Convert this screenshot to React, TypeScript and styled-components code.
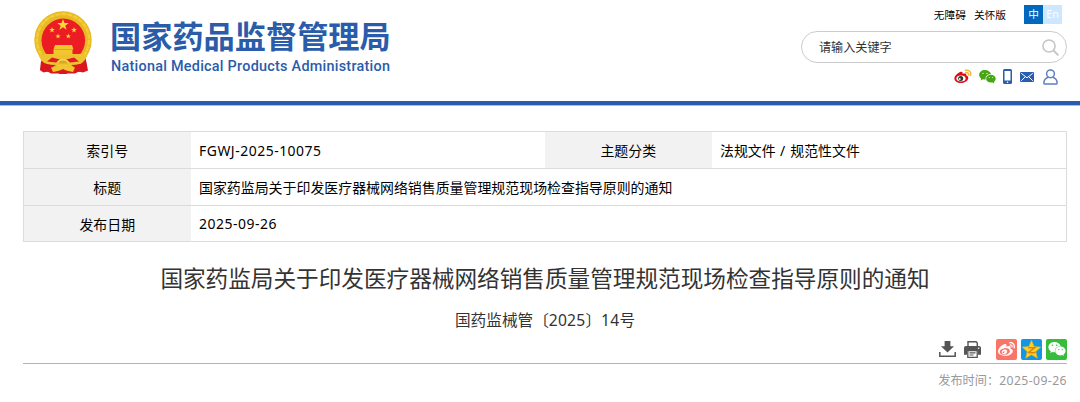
import styled, { createGlobalStyle } from 'styled-components';
import { FaWeibo, FaWeixin } from 'react-icons/fa';

const GlobalStyle = createGlobalStyle`
  * {
    box-sizing: border-box;
  }

  body {
    margin: 0;
    background: #fff;
    color: #000;
    font-family: 'Noto Sans', 'Noto Sans CJK SC', sans-serif;
    overflow: hidden;
  }
`;

const Page = styled.div`
  width: 1080px;
  height: 402px;
`;

const Header = styled.header`
  display: flex;
  justify-content: space-between;
  height: 105px;
  padding: 5px 13px 0 33px;
  border-bottom: 4px solid #2a5caf;
  box-shadow: 0 1px 0 #a9bfe0;
`;

const Brand = styled.div`
  display: flex;
  gap: 16px;
  padding-top: 5px;

  > svg {
    flex-shrink: 0;
  }
`;

const BrandText = styled.div`
  color: #2a5caa;
  white-space: nowrap;
`;

const BrandName = styled.h1`
  margin: 7px 0 0;
  font-family: 'Noto Sans CJK SC', sans-serif;
  font-size: 31.2px;
  font-weight: 700;
  line-height: 36px;
`;

const BrandSub = styled.p`
  margin: 4px 0 0 1px;
  font-family: Roboto, sans-serif;
  font-size: 14.4px;
  font-weight: 500;
  letter-spacing: 0.26px;
  line-height: 20px;
`;

const Tools = styled.div`
  display: flex;
  flex-direction: column;
  align-items: flex-end;
  width: 266px;
`;

const TopLinks = styled.div`
  display: flex;
  align-items: center;
  height: 19px;
  margin-right: 5px;
  font-size: 10.7px;
`;

const TopLink = styled.a`
  margin-right: 8px;
`;

const Lang = styled.span<{ $active?: boolean }>`
  width: 19px;
  height: 19px;
  margin-left: ${({ $active }) => ($active ? '10px' : '0')};
  background: ${({ $active }) => ($active ? '#0069bd' : '#cce7ff')};
  color: #fff;
  font-size: 10.7px;
  line-height: 19px;
  text-align: center;
`;

const SearchBox = styled.div`
  display: flex;
  align-items: center;
  justify-content: space-between;
  width: 266px;
  height: 32px;
  margin-top: 7px;
  padding: 0 7px 0 17px;
  border: 1.5px solid #ccc;
  border-radius: 16px;
  color: #333;
  font-size: 12.1px;
`;

const Social = styled.div`
  display: flex;
  align-items: center;
  height: 17px;
  margin: 5px 9px 0 0;
`;

const SocialItem = styled.span<{ $gap: number }>`
  display: flex;
  margin-left: ${({ $gap }) => $gap}px;
`;

const Main = styled.main`
  margin: 0 13px 0 23px;
  padding-top: 26px;
`;

const InfoTable = styled.div`
  border: 1px solid #dcdcdc;
  font-size: 13.93px;
`;

const InfoRow = styled.div`
  display: flex;
  height: 36px;

  & + & {
    height: 37px;
    border-top: 1px solid #dcdcdc;
  }

  & + & + & {
    height: 36px;
  }
`;

const Label = styled.div`
  display: flex;
  align-items: center;
  justify-content: center;
  width: 166.5px;
  background: #f2f2f2;
`;

const Value = styled.div<{ $width?: number }>`
  display: flex;
  align-items: center;
  width: ${({ $width }) => ($width ? `${$width}px` : 'auto')};
  padding-left: 8.5px;
  white-space: pre;
`;

const Latin = styled.span<{ $spacing?: number }>`
  letter-spacing: ${({ $spacing = 0.52 }) => $spacing}px;
`;

const Title = styled.h2`
  margin: 21px 0 0;
  color: #333;
  font-size: 22.63px;
  font-weight: 400;
  line-height: 32px;
  text-align: center;
  white-space: nowrap;
`;

const DocNumber = styled.p`
  margin: 13px 0 0;
  color: #333;
  font-size: 15.65px;
  line-height: 24px;
  text-align: center;
`;

const Actions = styled.div`
  display: flex;
  align-items: center;
  justify-content: flex-end;
  height: 32px;
  padding-top: 3px;
  border-bottom: 1.5px solid #b4b4b4;

  > svg + svg {
    margin-left: 8px;
  }
`;

const ShareList = styled.div`
  display: flex;
  gap: 4px;
  margin-left: 15px;
`;

const Share = styled.span<{ $color: string }>`
  display: flex;
  align-items: center;
  justify-content: center;
  width: 21px;
  height: 21px;
  border-radius: 2px;
  background: ${({ $color }) => $color};
  color: #fff;
`;

const PublishTime = styled.p`
  margin: 8px 0 0;
  color: #999;
  font-size: 12.2px;
  line-height: 18px;
  text-align: right;
`;

const STAR = 'M0-5 1.2-1.6 4.8-1.6 1.9.6 3 4 0 1.9-3 4-1.9.6-4.8-1.6-1.2-1.6Z';

const Emblem = () => (
  <svg width="61" height="66" viewBox="0 0 61 66">
    <path d="M9 45 7.5 60.5l3 2 4-1L18 63.5h24l4-2 4 1 5-2L52 45Z" fill="#d81a20" />
    <circle cx="30" cy="30" r="28.7" fill="#e8b923" />
    <circle cx="30" cy="30" r="26" fill="none" stroke="#f3cd3a" strokeWidth="2.4" strokeDasharray="5 1" />
    <circle cx="30.3" cy="30.3" r="21.8" fill="#ec1c24" />
    <g fill="#f9d936">
      <path d={STAR} transform="translate(30 15) scale(1.2)" />
      <path d={STAR} transform="translate(19 20) scale(.6)" />
      <path d={STAR} transform="translate(41 20) scale(.6)" />
      <path d={STAR} transform="translate(25 26.3) scale(.55)" />
      <path d={STAR} transform="translate(35.3 26.3) scale(.55)" />
    </g>
    <path d="M22 35h17l1.500 4.500h-20Z" fill="#f2c62f" />
    <path d="M20.500 39.500h19V44h10v2H12v-2h8.500Z" fill="#f2c62f" />
    <path d="M5 42c2 4 5 3 9 2.500h33c4 .5 6 1 8-2.500-1 6-4 10-8 12.500L36 55H24l-11-.5C9 52 6 48 5 42Z" fill="#edc230" />
    <path d="M14 51.500c2-1 3-3 5-4l8 2-4 3ZM46 51.500c-2-1-3-3-5-4l-8 2 4 3Z" fill="#e21b22" />
    <path d="M8 51c3 2.500 8 4 15 4l-5 3-2 4-6-1-3-1ZM53 51c-3 2.500-8 4-15 4l5 3 2 4 6-1 3-1Z" fill="#db161d" />
    <path d="M24.500 53.500c1-5 10-5 11 0" fill="#d8a828" stroke="#f7d84a" strokeWidth="1.400" />
    <path d="M18 57.500c4-1.500 8 0 12-2 4 2 8 .5 12 2l-2 4.500-7-1.500-3 1.500-3-1.500-7 1.500Z" fill="#f2c62f" />
    <path d="m26 61 4-2 4 2v3h-8Z" fill="#d81a20" />
  </svg>
);

const WeiboColor = () => (
  <svg width="18" height="15" viewBox="0 0 18 15">
    <path d="M6.2 3.1c1.8-.7 2.8.2 2.3 1.7 2.2-.8 4.3-.5 3.8 1.7 1.6.5 2.3 1.6 1.9 3C13.4 12.3 10.3 14 6.8 14 3.2 14 .4 12.2.4 9.5.4 7.2 3.3 4.2 6.2 3.1Z" fill="#e00b12" />
    <ellipse cx="7" cy="9.5" rx="4.6" ry="2.9" fill="#fff" />
    <circle cx="6.7" cy="9.6" r="2.5" fill="#333" />
    <circle cx="5.8" cy="10" r=".9" fill="#fff" />
    <path d="M11.5 1.3c3.4-.8 6 1.6 5 5M11.8 3.6c1.9-.4 3.1.8 2.6 2.5" fill="none" stroke="#f0b83a" strokeWidth="1.5" strokeLinecap="round" />
  </svg>
);

const WechatColor = () => (
  <svg width="17" height="14" viewBox="0 0 17 14">
    <path d="M6 0C2.7 0 .1 2.1.1 4.8c0 1.5.8 2.8 2.1 3.7l-.6 1.9 2.3-1.1c.8.2 1.8.3 2.8.2C6 6.6 8.3 4.3 12 4.1 11.3 1.7 9 0 6 0Z" fill="#45a714" />
    <path d="M16.7 8.7c0-2.2-2.2-3.9-4.8-3.9S7.1 6.500 7.100 8.700s2.200 3.900 4.800 3.900c.6 0 1.200-.1 1.700-.2l1.800 1-.5-1.600c1.100-.8 1.800-1.900 1.800-3.100Z" fill="#45a714" />
    <g fill="#d5edc9">
      <circle cx="4" cy="3.4" r=".7" />
      <circle cx="8" cy="3.4" r=".7" />
      <circle cx="10.3" cy="7.5" r=".6" />
      <circle cx="13.5" cy="7.5" r=".6" />
    </g>
  </svg>
);

const PhoneIcon = () => (
  <svg width="9" height="15" viewBox="0 0 9 15">
    <rect width="9" height="15" rx="1.5" fill="#2a5caf" />
    <path d="M1.5 2h6v9.5h-6Z" fill="#fff" />
    <circle cx="4.5" cy="13.2" r=".8" fill="#fff" />
  </svg>
);

const MailIcon = () => (
  <svg width="14" height="10" viewBox="0 0 14 10">
    <rect width="14" height="10" rx="1" fill="#2a5caf" />
    <path d="m1.2 1.3 5.8 4.5 5.8-4.5M1.2 8.8l3.9-3.9M12.8 8.8 8.9 4.9" fill="none" stroke="#fff" />
  </svg>
);

const UserIcon = () => (
  <svg width="15" height="16" viewBox="0 0 15 16" fill="none" stroke="#5f7fc0" strokeWidth="1.5">
    <circle cx="7.5" cy="4.8" r="3.9" />
    <path d="M5.3 8.3C2.5 9.2.9 11.3.9 14c0 .8.3 1.1 1.1 1.1h11c.8 0 1.1-.3 1.1-1.1 0-2.7-1.6-4.8-4.4-5.7" />
  </svg>
);

const SearchIcon = () => (
  <svg width="17" height="17" viewBox="0 0 17 17" fill="none" stroke="#c4c4c4" strokeWidth="1.5">
    <circle cx="7" cy="7" r="6.1" />
    <path d="m11.4 11.4 5 5" strokeWidth="1.9" />
  </svg>
);

const DownloadIcon = () => (
  <svg width="17" height="16" viewBox="0 0 17 16" fill="#555">
    <path d="M5.6 0h5.8v5.3h3.600L8.500 11.500 2 5.300h3.600Z" />
    <path d="M.8 11v4.200h15.400V11" fill="none" stroke="#555" strokeWidth="1.5" />
  </svg>
);

const PrintIcon = () => (
  <svg width="17" height="17" viewBox="0 0 17 17">
    <path d="M4 5.5V.8h8l1.3 1.3v3.4" fill="#fff" stroke="#555" strokeWidth="1.4" />
    <path d="M2 5h13c1.2 0 2 .8 2 2v6.8h-3V10H3v3.8H0V7c0-1.2.8-2 2-2Z" fill="#555" />
    <path d="M3.8 9.5h9.4v6.8H3.8Z" fill="#fff" stroke="#555" strokeWidth="1.3" />
    <path d="M5.5 11.9h6M5.5 14h4" stroke="#555" strokeWidth="1.1" />
    <circle cx="14.6" cy="7.3" r=".8" fill="#fff" />
  </svg>
);

const QzoneIcon = () => (
  <svg width="21" height="21" viewBox="0 0 21 21">
    <path d="m10.5 1.2 2.7 6.3 6.7.6-5 4.5 1.5 6.7-5.9-3.500-5.900 3.500 1.500-6.700-5-4.500 6.700-.6Z" fill="#fdd31f" stroke="#e3a51b" strokeWidth=".6" strokeLinejoin="round" />
    <path d="M7.2 8.7h6.5l-6 4.7c2 .5 4.7.4 7-.2" fill="none" stroke="#db8614" strokeWidth="1.5" />
  </svg>
);

export default function App() {
  return (
    <Page>
      <GlobalStyle />
      <Header>
        <Brand>
          <Emblem />
          <BrandText>
            <BrandName>国家药品监督管理局</BrandName>
            <BrandSub>National Medical Products Administration</BrandSub>
          </BrandText>
        </Brand>
        <Tools>
          <TopLinks>
            <TopLink>无障碍</TopLink>
            <TopLink>关怀版</TopLink>
            <Lang $active>中</Lang>
            <Lang>En</Lang>
          </TopLinks>
          <SearchBox>
            请输入关键字
            <SearchIcon />
          </SearchBox>
          <Social>
            <SocialItem $gap={0}><WeiboColor /></SocialItem>
            <SocialItem $gap={7}><WechatColor /></SocialItem>
            <SocialItem $gap={7}><PhoneIcon /></SocialItem>
            <SocialItem $gap={8}><MailIcon /></SocialItem>
            <SocialItem $gap={9}><UserIcon /></SocialItem>
          </Social>
        </Tools>
      </Header>

      <Main>
        <InfoTable>
          <InfoRow>
            <Label>索引号</Label>
            <Value $width={354.5}><Latin>FGWJ-2025-10075</Latin></Value>
            <Label>主题分类</Label>
            <Value>法规文件<Latin $spacing={0.7}> / </Latin>规范性文件</Value>
          </InfoRow>
          <InfoRow>
            <Label>标题</Label>
            <Value>国家药监局关于印发医疗器械网络销售质量管理规范现场检查指导原则的通知</Value>
          </InfoRow>
          <InfoRow>
            <Label>发布日期</Label>
            <Value><Latin>2025-09-26</Latin></Value>
          </InfoRow>
        </InfoTable>

        <Title>国家药监局关于印发医疗器械网络销售质量管理规范现场检查指导原则的通知</Title>
        <DocNumber>国药监械管〔<Latin $spacing={0.2}>2025</Latin>〕<Latin $spacing={0.2}>14</Latin>号</DocNumber>

        <Actions>
          <DownloadIcon />
          <PrintIcon />
          <ShareList>
            <Share $color="#f87568"><FaWeibo size={17} /></Share>
            <Share $color="#1296e8"><QzoneIcon /></Share>
            <Share $color="#35bd3b"><FaWeixin size={18} /></Share>
          </ShareList>
        </Actions>
        <PublishTime>发布时间：<Latin $spacing={0.42}>2025-09-26</Latin></PublishTime>
      </Main>
    </Page>
  );
}
